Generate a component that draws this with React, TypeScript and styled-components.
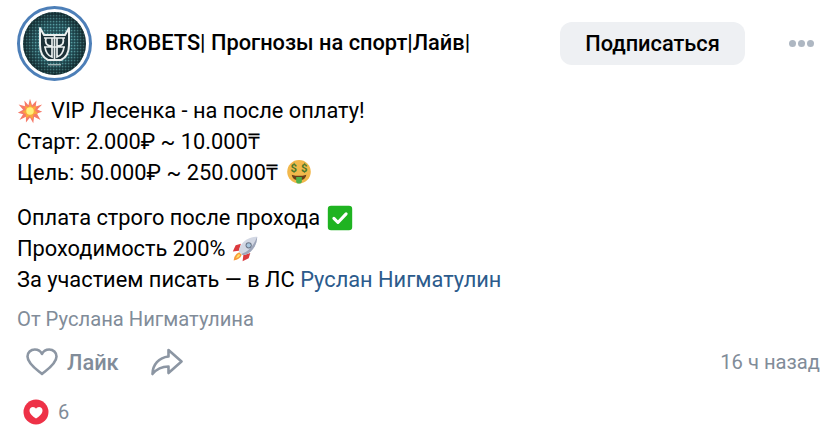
import React from "react";
import styled, { createGlobalStyle } from "styled-components";

const GlobalStyle = createGlobalStyle`
  html, body {
    margin: 0;
    padding: 0;
    background: #ffffff;
  }
  body {
    font-family: Roboto, "Liberation Sans", sans-serif;
    color: #000000;
  }
`;

const Post = styled.div`
  width: 832px;
  height: 435px;
  box-sizing: border-box;
  padding: 6px 12px 0 17px;
  overflow: hidden;
`;

const Header = styled.div`
  display: flex;
  align-items: center;
  height: 74px;
`;

const Avatar = styled.div`
  width: 75px;
  height: 75px;
  box-sizing: border-box;
  border: 3px solid #4d7fb8;
  border-radius: 50%;
  padding: 3px;
  flex-shrink: 0;
  margin-right: 13px;
`;

const Name = styled.div`
  flex: 1;
  font-size: 21.8px;
  font-weight: 500;
  line-height: 24px;
  white-space: nowrap;
`;

const SubscribeButton = styled.button`
  width: 185px;
  height: 43px;
  border: none;
  border-radius: 12px;
  background: #eef0f3;
  color: #000000;
  font-family: inherit;
  font-size: 21.8px;
  font-weight: 500;
  padding: 0;
  margin-right: 44px;
`;

const Dots = styled.div`
  display: flex;
  gap: 2px;
  margin-right: 6px;
`;

const Dot = styled.span`
  width: 7px;
  height: 7px;
  border-radius: 50%;
  background: #aeb7c2;
`;

const Body = styled.div`
  margin-top: 15px;
  font-size: 21.8px;
  line-height: 31px;
`;

const Paragraph = styled.p`
  margin: 0 0 14px;
`;

const Line = styled.div`
  display: flex;
  align-items: center;
  height: 31px;
  white-space: pre;
`;

const Emoji = styled.svg<{ $gap?: number; $after?: number }>`
  width: 26px;
  height: 26px;
  flex-shrink: 0;
  margin-left: ${(p) => p.$gap ?? 0}px;
  margin-right: ${(p) => p.$after ?? 0}px;
`;

const MentionLink = styled.a`
  color: #2c5b8c;
  text-decoration: none;
`;

const Author = styled.div`
  margin-top: -2px;
  font-size: 20.2px;
  line-height: 24px;
  color: #818c99;
`;

const Actions = styled.div`
  display: flex;
  align-items: center;
  height: 40px;
  margin-top: 11px;
  padding-left: 9px;
`;

const LikeLabel = styled.span`
  margin-left: 9px;
  margin-right: 32px;
  font-size: 21.8px;
  font-weight: 500;
  color: #818c99;
`;

const ActionIcon = styled.svg`
  flex-shrink: 0;
`;

const Time = styled.span`
  margin-left: auto;
  font-size: 20.2px;
  color: #818c99;
`;

const Reactions = styled.div`
  display: flex;
  align-items: center;
  margin-top: 17px;
  padding-left: 6px;
  gap: 9px;
  font-size: 20px;
  line-height: 26px;
  color: #818c99;
`;

function AvatarImage() {
  return (
    <svg width="63" height="63" viewBox="0 0 63 63" style={{ display: "block" }}>
      <defs>
        <pattern id="speck" width="3" height="3" patternUnits="userSpaceOnUse">
          <rect width="3" height="3" fill="#2a5c64" />
          <rect width="1.2" height="1.2" fill="#5a9ea2" />
          <rect x="1.5" y="1.5" width="1.2" height="1.2" fill="#16323a" />
        </pattern>
        <radialGradient id="shade" cx="50%" cy="50%" r="50%">
          <stop offset="60%" stopColor="#000" stopOpacity="0" />
          <stop offset="100%" stopColor="#000" stopOpacity="0.45" />
        </radialGradient>
      </defs>
      <circle cx="31.5" cy="31.5" r="31.5" fill="url(#speck)" />
      <circle cx="31.5" cy="31.5" r="31.5" fill="url(#shade)" />
      <path
        d="M17 16 L21 23 H42 L46 16 V33 Q46 44 38 48 H25 Q17 44 17 33 Z"
        fill="#1c3138"
        stroke="#e9eeee"
        strokeWidth="2"
        strokeLinejoin="round"
      />
      <path
        d="M31.5 24 V47 M21 26 H42 M21 35 H42 M22 35 Q23 43 29 45 V35 M41 35 Q40 43 34 45 V35 M23 26 Q21 34 29 34 V26 M40 26 Q42 34 34 34 V26"
        fill="none"
        stroke="#e9eeee"
        strokeWidth="1.7"
      />
      <rect x="25" y="52" width="13" height="1.4" fill="#9fb4b6" />
    </svg>
  );
}

function BoomEmoji() {
  return (
    <Emoji viewBox="0 0 32 32" $after={8}>
      <path
        d="M16 1 L18.5 9 L24 3 L23 10.5 L31 8 L25 14 L31 17 L24.5 19 L29 27 L21 23 L20 31 L16 24 L11 30 L11 23 L3 27 L7.5 20 L1 18 L7.5 14.5 L2 8 L10 10 L9 3 L14 9 Z"
        fill="#f67a68"
      />
      <path
        d="M16 6 L18.5 11 L24 9.5 L22 15 L26 19 L20.5 20 L19 26 L15.5 22 L11 25 L11 20 L6.5 17 L11 14.5 L9.5 9.5 L14.5 11.5 Z"
        fill="#fba83c"
      />
      <circle cx="16" cy="16" r="4.6" fill="#fff27a" />
    </Emoji>
  );
}

function MoneyEmoji() {
  return (
    <Emoji viewBox="0 0 32 32" $gap={8}>
      <circle cx="16" cy="14.5" r="14.5" fill="#f2b84b" />
      <text x="9.5" y="15" fontSize="14" fontWeight="700" textAnchor="middle" fill="#4a7a2c" fontFamily="Roboto">
        $
      </text>
      <text x="22.5" y="15" fontSize="14" fontWeight="700" textAnchor="middle" fill="#4a7a2c" fontFamily="Roboto">
        $
      </text>
      <path d="M7 18 Q16 21 25 18 Q24 25 16 25 Q8 25 7 18 Z" fill="#6b3f18" />
      <path d="M12.5 21 H19.5 V26 Q19.5 29 16 29 Q12.5 29 12.5 26 Z" fill="#4fb04a" />
    </Emoji>
  );
}

function CheckEmoji() {
  return (
    <Emoji viewBox="0 0 32 32" $gap={7}>
      <rect x="1" y="1" width="30" height="30" rx="4" fill="#1fb321" />
      <path
        d="M8.5 16.5 L13.5 21.5 L23.5 11"
        fill="none"
        stroke="#ffffff"
        strokeWidth="3.8"
        strokeLinecap="round"
        strokeLinejoin="round"
      />
    </Emoji>
  );
}

function RocketEmoji() {
  return (
    <Emoji viewBox="0 0 32 32" $gap={7}>
      <path d="M9 20 L12 23 Q10 29 2 30 Q3 22 9 20 Z" fill="#f79a3a" />
      <path d="M8.5 22 L10 23.5 Q9 27 5 27.5 Q5.5 24 8.5 22 Z" fill="#ffe066" />
      <path d="M11 9.5 L4.5 11.5 L1 19 L8.5 18 Z" fill="#db3a3e" />
      <path d="M22.5 21 L20.5 27.5 L13 31 L14 23.5 Z" fill="#db3a3e" />
      <path
        d="M31 1 C23 1 15 5 10.5 12 C9 15 8.5 17 8.5 19 L13 23.5 C15 23.5 17 23 20 21.5 C27 17 31 9 31 1 Z"
        fill="#d3d8e4"
      />
      <path
        d="M31 1 C31 9 27 17 20 21.5 C17 23 15 23.5 13 23.5 L11.5 22 C20 20 27 11 31 1 Z"
        fill="#9ea6ba"
      />
      <circle cx="20.5" cy="11.5" r="3.8" fill="#6b7688" />
      <circle cx="20.5" cy="11.5" r="2.5" fill="#a9c6de" />
    </Emoji>
  );
}

export default function App() {
  return (
    <>
      <GlobalStyle />
      <Post>
        <Header>
          <Avatar>
            <AvatarImage />
          </Avatar>
          <Name>BROBETS| Прогнозы на спорт|Лайв|</Name>
          <SubscribeButton>Подписаться</SubscribeButton>
          <Dots>
            <Dot />
            <Dot />
            <Dot />
          </Dots>
        </Header>
        <Body>
          <Paragraph>
            <Line>
              <BoomEmoji />
              <span>VIP Лесенка - на после оплату!</span>
            </Line>
            <Line>Старт: 2.000₽ ~ 10.000₸</Line>
            <Line>
              Цель: 50.000₽ ~ 250.000₸
              <MoneyEmoji />
            </Line>
          </Paragraph>
          <Paragraph>
            <Line>
              Оплата строго после прохода
              <CheckEmoji />
            </Line>
            <Line>
              Проходимость 200%
              <RocketEmoji />
            </Line>
            <Line>
              За участием писать — в ЛС <MentionLink>Руслан Нигматулин</MentionLink>
            </Line>
          </Paragraph>
        </Body>
        <Author>От Руслана Нигматулина</Author>
        <Actions>
          <ActionIcon width="32" height="28" viewBox="0 0 32 28">
            <path
              d="M16 26 C12 22.5 1.5 16 1.5 8.5 C1.5 4.5 4.7 1.5 8.8 1.5 C11.7 1.5 14.6 3 16 6 C17.4 3 20.3 1.5 23.2 1.5 C27.3 1.5 30.5 4.5 30.5 8.5 C30.5 16 20 22.5 16 26 Z"
              fill="none"
              stroke="#8c96a3"
              strokeWidth="2.6"
              strokeLinejoin="round"
            />
          </ActionIcon>
          <LikeLabel>Лайк</LikeLabel>
          <ActionIcon width="32" height="28" viewBox="0 0 32 28">
            <path
              d="M17.5 2 L30.5 13.5 L17.5 25 V18.5 C11 18.5 6 20.5 1.5 26 C1.5 16.5 8 9.5 17.5 8.5 Z"
              fill="none"
              stroke="#8c96a3"
              strokeWidth="2.6"
              strokeLinejoin="round"
            />
          </ActionIcon>
          <Time>16 ч назад</Time>
        </Actions>
        <Reactions>
          <svg width="26" height="26" viewBox="0 0 26 26">
            <circle cx="13" cy="13" r="12.5" fill="#ee3147" />
            <path
              d="M13 19.5 C10 17.5 6.5 15 6.5 11.5 C6.5 9.5 8 8 10 8 C11.3 8 12.4 8.7 13 9.8 C13.6 8.7 14.7 8 16 8 C18 8 19.5 9.5 19.5 11.5 C19.5 15 16 17.5 13 19.5 Z"
              fill="#ffffff"
            />
          </svg>
          <span>6</span>
        </Reactions>
      </Post>
    </>
  );
}
